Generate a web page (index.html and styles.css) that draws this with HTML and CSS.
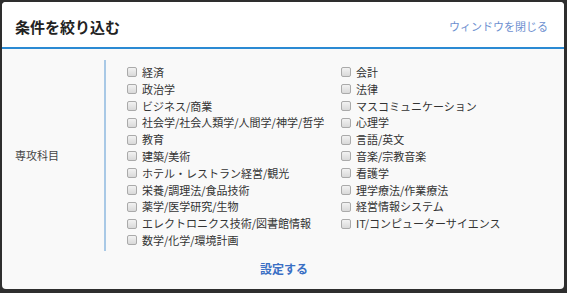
FILE: index.html
```html
<!DOCTYPE html>
<html lang="ja">
<head>
<meta charset="utf-8">
<link rel="stylesheet" href="styles.css">
</head>
<body>
<div class="modal">
  <div class="modal-header">
    <h2 class="title">条件を絞り込む</h2>
    <a class="close">ウィンドウを閉じる</a>
  </div>
  <div class="modal-body">
    <div class="field">
      <div class="field-label">専攻科目</div>
      <div class="options">
        <label class="opt"><span class="box"></span>経済</label>
        <label class="opt"><span class="box"></span>会計</label>
        <label class="opt"><span class="box"></span>政治学</label>
        <label class="opt"><span class="box"></span>法律</label>
        <label class="opt"><span class="box"></span>ビジネス/商業</label>
        <label class="opt"><span class="box"></span>マスコミュニケーション</label>
        <label class="opt"><span class="box"></span>社会学/社会人類学/人間学/神学/哲学</label>
        <label class="opt"><span class="box"></span>心理学</label>
        <label class="opt"><span class="box"></span>教育</label>
        <label class="opt"><span class="box"></span>言語/英文</label>
        <label class="opt"><span class="box"></span>建築/美術</label>
        <label class="opt"><span class="box"></span>音楽/宗教音楽</label>
        <label class="opt"><span class="box"></span>ホテル・レストラン経営/観光</label>
        <label class="opt"><span class="box"></span>看護学</label>
        <label class="opt"><span class="box"></span>栄養/調理法/食品技術</label>
        <label class="opt"><span class="box"></span>理学療法/作業療法</label>
        <label class="opt"><span class="box"></span>薬学/医学研究/生物</label>
        <label class="opt"><span class="box"></span>経営情報システム</label>
        <label class="opt"><span class="box"></span>エレクトロニクス技術/図書館情報</label>
        <label class="opt"><span class="box"></span>IT/コンピューターサイエンス</label>
        <label class="opt"><span class="box"></span>数学/化学/環境計画</label>
      </div>
    </div>
    <div class="actions"><a class="submit">設定する</a></div>
  </div>
</div>
</body>
</html>
```

FILE: styles.css
```css
html, body {
  margin: 0;
  padding: 0;
  background: #2e2e2e;
  height: 293px;
  overflow: hidden;
  font-family: "Noto Sans CJK JP", "Noto Sans", sans-serif;
  color: #333;
}
.modal {
  margin: 2px 0 0 2px;
  width: 562px;
  height: 287px;
  border-radius: 4px;
  background: #f9f9f9;
  overflow: hidden;
  display: flex;
  flex-direction: column;
}
.modal-header {
  background: #fff;
  height: 42px;
  border-bottom: 2px solid #2b8ad3;
  display: flex;
  align-items: center;
  justify-content: space-between;
  padding: 3px 16px 0 13px;
  box-sizing: content-box;
}
.title {
  margin: 0;
  font-size: 15px;
  font-weight: bold;
  color: #222;
}
.close {
  font-size: 11px;
  color: #6d8fd0;
}
.modal-body {
  flex: 1;
  display: flex;
  flex-direction: column;
  padding-top: 11px;
}
.field {
  display: flex;
  align-items: stretch;
}
.field-label {
  width: 104px;
  padding-left: 13px;
  box-sizing: border-box;
  display: flex;
  align-items: center;
  font-size: 11px;
  color: #444;
  border-right: 2px solid #a9c9e6;
}
.options {
  display: grid;
  grid-template-columns: 214px 200px;
  grid-auto-rows: 16.8px;
  padding: 4px 0 2px 21px;
}
.opt {
  display: flex;
  align-items: center;
  font-size: 11px;
  line-height: 16.8px;
  white-space: nowrap;
  color: #333;
}
.box {
  width: 8px;
  height: 8px;
  border: 1px solid #aaa;
  border-radius: 2px;
  background: linear-gradient(#f2f2f2, #d9d9d9);
  margin-right: 5px;
  flex: none;
}
.actions {
  display: flex;
  justify-content: center;
  padding-top: 9px;
  padding-left: 2px;
}
.submit {
  font-size: 12px;
  font-weight: bold;
  color: #3a6fc4;
}
```
